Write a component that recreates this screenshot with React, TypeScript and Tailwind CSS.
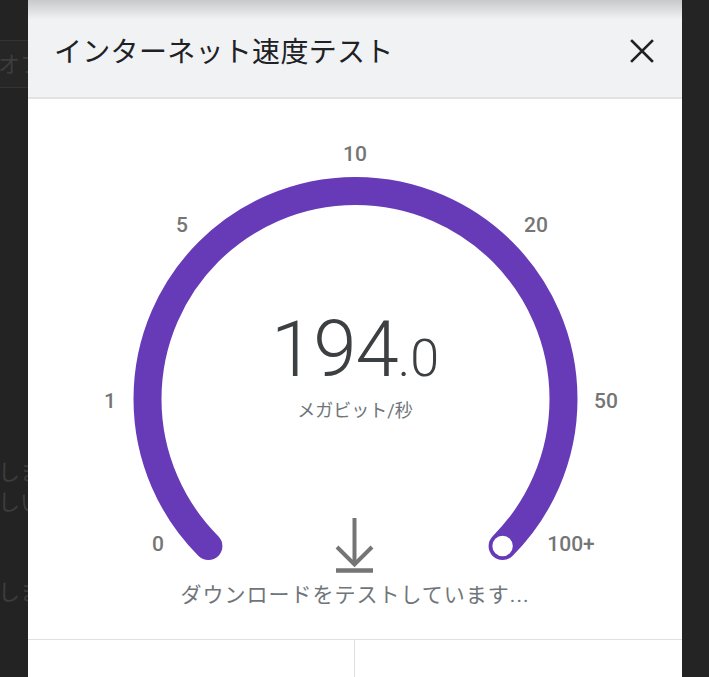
import React from 'react'

const PURPLE = '#673ab7'

const labels = [
  { t: '10', x: 327, y: 62 },
  { t: '5', x: 154, y: 133 },
  { t: '20', x: 508, y: 133 },
  { t: '1', x: 82, y: 309 },
  { t: '50', x: 578, y: 309 },
  { t: '0', x: 130, y: 452 },
  { t: '100+', x: 543, y: 452 },
]

function Gauge() {
  const cx = 327.5
  const cy = 300
  const r = 208
  const d = r * Math.SQRT1_2
  const start = `${cx - d} ${cy + d}`
  const end = `${cx + d} ${cy + d}`
  return (
    <svg className="absolute inset-0" width="654" height="540" viewBox="0 0 654 540">
      <path
        d={`M ${start} A ${r} ${r} 0 1 1 ${end}`}
        fill="none"
        stroke={PURPLE}
        strokeWidth="28"
        strokeLinecap="round"
      />
      <circle cx={cx + d} cy={cy + d} r="11" fill="#fff" stroke={PURPLE} strokeWidth="1.5" />
      {labels.map((l) => (
        <text
          key={l.t}
          x={l.x}
          y={l.y}
          textAnchor="middle"
          fill="#757575"
          fontSize="21"
          fontWeight="500"
          fontFamily="Roboto, 'Noto Sans', sans-serif"
        >
          {l.t}
        </text>
      ))}
    </svg>
  )
}

function DownloadIcon() {
  return (
    <svg width="40" height="58" viewBox="0 0 40 58" fill="none" stroke="#757575">
      <path d="M19.5 2 V48" strokeWidth="4" />
      <path d="M2 31 L19.5 48.5 L37 31" strokeWidth="4" />
      <path d="M1 54.5 H38" strokeWidth="4.5" />
    </svg>
  )
}

export default function App() {
  const font = "font-['Roboto','Noto_Sans_CJK_JP',sans-serif]"
  return (
    <div className={`w-[709px] h-[677px] bg-[#232323] flex overflow-hidden ${font}`}>
      {/* page behind the dialog */}
      <div className="w-[28px] shrink-0 overflow-hidden flex flex-col text-[#3d3d3d] text-[22px] whitespace-nowrap">
        <div className="h-[40px]" />
        <div className="h-[48px] bg-[#262626] border-y border-[#333] flex items-center">
          <span className="-ml-[2px]">オフ</span>
        </div>
        <div className="h-[370px]" />
        <div className="leading-[30px] -ml-[2px]">しま</div>
        <div className="leading-[30px] -ml-[2px]">しい</div>
        <div className="h-[60px]" />
        <div className="leading-[30px] -ml-[2px]">しま</div>
      </div>

      <div className="w-[654px] shrink-0 flex flex-col bg-white">
        <div className="h-[99px] shrink-0 bg-gradient-to-b from-[#c8c9ca] via-[#f1f2f4] via-[20%] to-[#f1f2f4] border-b-2 border-[#e2e3e5] flex items-center justify-between pl-[26px] pr-[28px] pt-[8px]">
          <h1 className="text-[28px] text-[#202124] tracking-[0.3px]">インターネット速度テスト</h1>
          <svg width="24" height="24" viewBox="0 0 24 24" stroke="#202124" strokeWidth="2.6" strokeLinecap="square" className="-mt-[4px]">
            <path d="M2 2 L22 22 M22 2 L2 22" />
          </svg>
        </div>

        <div className="relative h-[540px] shrink-0 flex flex-col items-center">
          <Gauge />
          <div className="relative mt-[212px] flex items-baseline text-[#3c4043] font-light leading-none">
            <span className="text-[78px] tracking-[-1px]">194</span>
            <span className="text-[52px]">.0</span>
          </div>
          <div className="relative mt-[8px] text-[18px] text-[#70757a]">メガビット/秒</div>
          <div className="relative mt-[92px]">
            <DownloadIcon />
          </div>
          <div className="relative mt-[6px] text-[21px] text-[#70757a] tracking-[1px]">
            ダウンロードをテストしています...
          </div>
        </div>

        <div className="flex-1 border-t border-[#e0e0e0] flex">
          <div className="w-[327px] border-r border-[#e0e0e0]" />
          <div className="flex-1" />
        </div>
      </div>

      <div className="flex-1 bg-[#242424]" />
    </div>
  )
}
